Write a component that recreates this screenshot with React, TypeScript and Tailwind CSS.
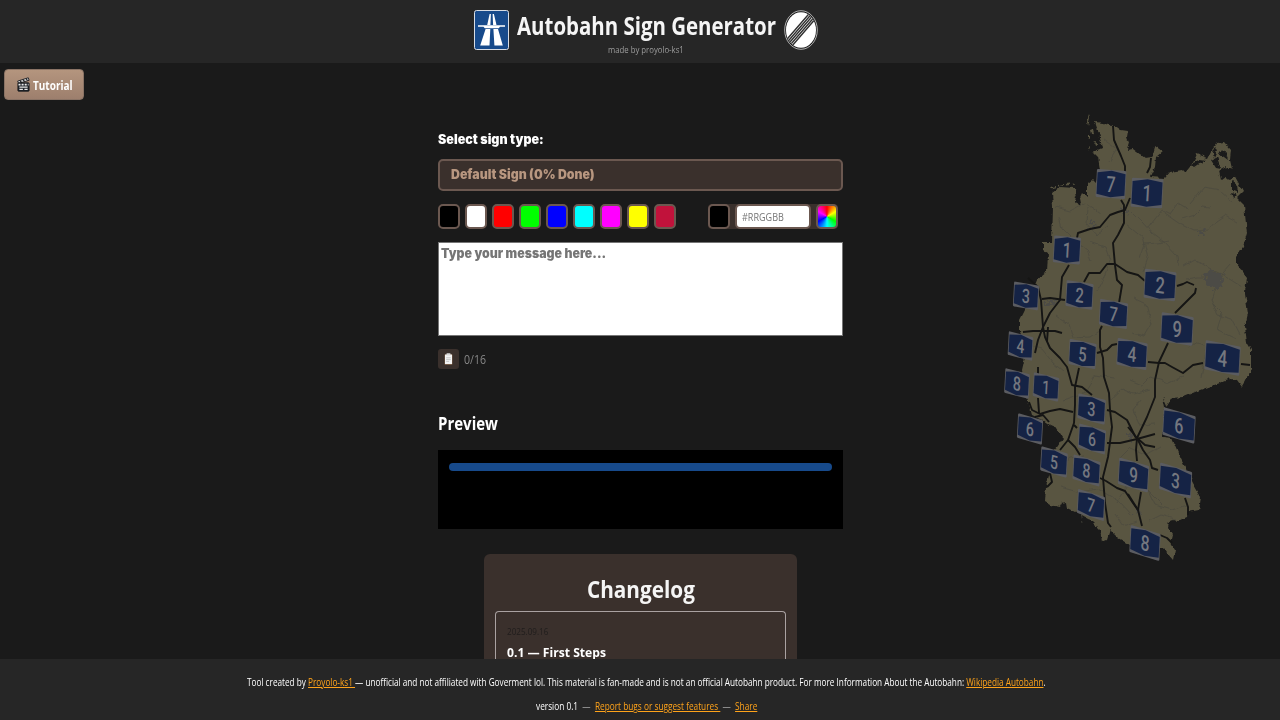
import { useLayoutEffect, useRef, useState, type ReactNode } from "react";

type FitProps = { width: number; className?: string; children: ReactNode };

/** A single line of text condensed or widened to an exact width. */
function Fit({ width, className = "", children }: FitProps) {
  const ref = useRef<HTMLSpanElement>(null);
  const [scale, setScale] = useState(1);
  useLayoutEffect(() => {
    if (ref.current) setScale(width / ref.current.offsetWidth);
  }, [width]);
  return (
    <span className={`block whitespace-pre ${className}`} style={{ width }}>
      <span ref={ref} className="inline-block origin-left" style={{ transform: `scaleX(${scale})` }}>
        {children}
      </span>
    </span>
  );
}

function MotorwayIcon() {
  return (
    <svg className="h-10 w-[35px]" viewBox="0 0 35 40">
      <rect x="0.5" y="0.5" width="34" height="39" rx="2" fill="#174a8b" stroke="#d7dce4" />
      <path d="M15.6 4h1.300l-.5 11h-3.200zM18.600 4h1.300l2.600 11h-3.400z" fill="#fff" />
      <path d="M4 15.300h27v1.500H26l-1.200 1.400h-14L9.500 16.800H4z" fill="#fff" />
      <path d="M11.600 19h4.700l-.8 16.500H6.200zM19.400 19H24l4.800 16.500h-8.400z" fill="#fff" />
    </svg>
  );
}

function EndSignIcon() {
  return (
    <svg className="h-10 w-[34px]" viewBox="0 0 34 40" preserveAspectRatio="none">
      <defs>
        <clipPath id="disc">
          <ellipse cx="17" cy="20" rx="15" ry="17.8" />
        </clipPath>
      </defs>
      <ellipse cx="17" cy="20" rx="16.3" ry="19.3" fill="#1b1b1b" stroke="#d8d8d8" strokeWidth="0.8" />
      <ellipse cx="17" cy="20" rx="15" ry="17.8" fill="#fff" />
      <g clipPath="url(#disc)" stroke="#303030" strokeWidth="1.45">
        <path d="M-8 42 30-2M-5.300 42 32.700-2M-2.600 42 35.400-2M.1 42 38.100-2M2.800 42 40.800-2" />
      </g>
    </svg>
  );
}

function ClapperIcon() {
  return (
    <svg className="h-[15px] w-[13px]" viewBox="0 0 13 15">
      <path d="M.7 4.100 11.300.8l.8 2.500L1.500 6.400z" fill="#e6e6e6" stroke="#17191e" strokeWidth=".9" />
      <path d="m3 3.600 1.500 1.800M6 2.600l1.500 1.800M9 1.700l1.500 1.800" stroke="#17191e" strokeWidth="1.1" />
      <rect x=".9" y="5.8" width="11.2" height="8.4" rx=".7" fill="#20242b" stroke="#121418" strokeWidth=".8" />
      <path d="M1.500 7.600h10" stroke="#eee" strokeWidth="1.8" strokeDasharray="2 1.1" />
      <path d="M2.400 10.200h8.200M2.400 12.300h3.500M7.400 12.300h3.200" stroke="#e8e8e8" strokeWidth="1.3" />
    </svg>
  );
}

function ClipboardIcon() {
  return (
    <svg className="h-3 w-[9px]" viewBox="0 0 9 12">
      <rect x=".6" y="1.3" width="7.8" height="10.4" rx=".8" fill="#8a6a50" />
      <rect x="1" y="1.6" width="7" height="9.4" fill="#f4f4f4" />
      <rect x="2.5" y=".2" width="4" height="2.4" rx=".6" fill="#d9d9d9" />
      <path d="M2.200 4.800h4.600M2.200 6.600h4.600M2.200 8.400h3" stroke="#b5b5b5" strokeWidth=".7" />
    </svg>
  );
}

const LAND =
  "1095,122 1104,123 1110,126 1114,125 1121,130 1128,131 1127,137 1129,143 1127,150 1133,149 1137,152 1145,158 1152,157 1155,147 1162,152 1156,157 1155,167 1150,177 1165,178 1170,172 1182,170 1185,173 1193,163 1197,154 1208,158 1212,150 1217,143 1224,142 1231,150 1230,160 1233,173 1238,182 1243,192 1237,198 1244,205 1247,233 1243,247 1236,257 1236,263 1247,277 1245,293 1248,313 1245,327 1247,343 1251,350 1251,370 1245,382 1242,387 1237,380 1230,379 1220,383 1200,390 1183,397 1172,398 1167,406 1163,397 1165,407 1163,437 1172,438 1180,457 1185,467 1193,483 1201,497 1199,510 1188,512 1187,517 1180,520 1169,522 1168,527 1173,535 1171,543 1175,550 1173,560 1167,553 1163,547 1150,547 1130,545 1118,538 1110,530 1107,540 1102,542 1100,530 1090,520 1077,513 1067,508 1066,502 1062,503 1060,507 1050,505 1045,502 1046,487 1050,473 1050,457 1063,438 1057,428 1050,425 1043,420 1032,415 1027,397 1022,370 1025,357 1020,330 1020,320 1025,310 1037,280 1047,272 1048,253 1043,250 1043,242 1052,242 1053,207 1052,193 1060,187 1075,188 1078,202 1082,193 1087,198 1087,183 1092,179 1097,184 1100,170 1098,157 1093,152 1102,148 1100,137";

const ROADS = [
  "1113,126 1114,140 1121,156 1125,166 1125,172",
  "1121,200 1124,205 1124,223 1118,235 1113,243 1115,265 1117,280 1122,285 1119,303",
  "1102,326 1100,330 1100,347 1103,358 1104,377 1109,393 1110,410 1112,427 1108,457 1103,477 1105,503 1108,523 1111,527",
  "1130,198 1125,210 1118,212 1110,215 1100,227 1090,229 1078,233 1077,238",
  "1069,265 1062,277 1060,300 1050,313 1043,327 1038,340 1035,353",
  "1038,367 1038,378",
  "1038,398 1039,413",
  "1151,158 1150,167 1147,173",
  "1042,299 1050,298 1065,300",
  "1084,282 1089,273 1100,273 1107,264 1115,264 1127,272 1138,275 1145,281",
  "1177,286 1183,284 1187,282 1194,285",
  "1196,288 1195,293 1185,303 1175,313",
  "1028,278 1038,287 1041,300 1043,327 1045,337 1050,348 1060,358 1067,367 1072,385 1082,387 1092,395",
  "1107,410 1115,412 1127,420 1136,438",
  "1023,332 1033,331 1043,331 1055,331 1062,333",
  "1048,327 1047,342",
  "1079,368 1075,387 1075,405 1074,423 1068,440 1060,450",
  "1074,425 1077,428",
  "1068,440 1075,447 1080,455",
  "1050,473 1052,482 1047,487",
  "1029,402 1032,410 1040,414 1050,411 1060,409 1073,412",
  "1035,417 1043,415 1049,422",
  "1107,443 1120,443 1137,439 1155,434",
  "1168,343 1159,362 1155,380 1155,397 1147,417 1137,438 1136,450 1137,461",
  "1128,427 1137,438 1145,445 1155,447",
  "1137,438 1143,450 1150,460 1152,468 1158,470",
  "1141,492 1138,510 1142,526",
  "1100,478 1106,481 1117,488 1125,491 1133,503 1138,510",
  "1128,494 1138,510",
  "1185,498 1188,507 1188,515",
  "1160,535 1167,538 1172,543",
  "1097,353 1107,350 1112,345 1117,344",
  "1148,362 1159,363 1165,363 1172,367 1183,373 1193,365 1203,363",
  "1241,364 1250,365",
];

const MINOR_ROADS = [
  "1132,212 1142,222 1152,233 1164,242 1177,256 1178,265",
  "1164,213 1180,224 1194,231 1208,230 1216,221 1225,215 1238,222",
  "1139,258 1144,244 1158,243 1170,241",
  "1088,207 1087,224 1097,235 1108,226",
  "1055,207 1070,211 1085,203 1101,214",
  "1184,266 1195,260 1208,268 1223,275 1242,287",
  "1148,228 1162,210 1170,214 1178,203 1188,209",
  "1190,204 1204,187 1220,190 1233,202",
  "1216,285 1211,300 1218,315 1232,319 1240,334",
  "1186,279 1198,277 1209,277 1217,280 1230,265",
  "1182,219 1195,215 1203,207 1210,208",
  "1059,217 1062,228 1074,240 1087,250 1091,261",
  "1090,242 1105,247 1110,260 1103,280 1097,291",
  "1127,224 1143,237 1148,258 1143,272",
  "1133,298 1146,304 1151,324 1144,336 1132,333",
  "1130,380 1142,385 1150,377 1169,383 1184,376",
  "1188,348 1198,342 1207,346 1201,377",
  "1213,304 1222,313 1217,330 1236,339",
  "1055,315 1069,325 1073,338 1090,337 1100,330",
  "1027,345 1042,349 1053,363 1063,371",
  "1063,401 1085,393 1096,375 1114,378",
  "1110,400 1122,389 1133,394 1150,389",
  "1060,487 1078,492 1098,489 1120,502 1132,515",
  "1083,522 1080,508 1100,518",
  "1148,490 1155,505 1172,510 1186,505",
  "1149,521 1161,515 1175,519",
  "1117,503 1131,481 1147,489 1163,505",
  "1120,458 1130,448 1146,455 1160,447",
  "1140,400 1133,410 1140,425 1155,424",
  "1104,140 1117,149 1109,162",
  "1060,467 1071,458 1085,456",
  "1115,513 1124,526 1137,521",
];

type Shield = [label: string, x: number, y: number, w: number, h: number, tilt: number];

const SHIELDS: Shield[] = [
  ["7", 1111, 184, 29.5, 28, 4],
  ["1", 1147, 193, 31.5, 29, 3],
  ["1", 1067, 250, 27, 27, 5],
  ["3", 1026, 296, 25, 25, 10],
  ["2", 1079.5, 295, 27, 26, 9],
  ["2", 1160, 285, 31.5, 29, 7],
  ["7", 1113.5, 314, 28, 26, 10],
  ["9", 1177, 329, 32, 29, 9],
  ["4", 1020.5, 346, 24.5, 24, 14],
  ["5", 1082.5, 354, 27, 25.5, 11],
  ["4", 1132, 354, 30, 27, 11],
  ["4", 1222.5, 358, 35, 29.5, 11],
  ["8", 1017, 383.5, 24.5, 25, 14],
  ["1", 1046, 387, 25.5, 24, 13],
  ["3", 1091.5, 409, 27.5, 25, 14],
  ["6", 1179, 425.5, 32, 28, 16],
  ["6", 1030, 429, 25, 25, 16],
  ["6", 1092, 439, 27, 24.5, 15],
  ["5", 1054, 462, 26.5, 24.5, 16],
  ["8", 1086.5, 470.5, 27, 25, 16],
  ["9", 1133.5, 475, 30, 27, 16],
  ["3", 1175.5, 480.5, 32, 27, 17],
  ["7", 1091, 505, 27, 24.5, 17],
  ["8", 1145, 543, 30, 27.5, 17],
];

function GermanyMap() {
  return (
    <svg className="h-[456px] w-[256px]" viewBox="1000 110 256 456">
      <defs>
        <filter id="coast" x="-5%" y="-5%" width="110%" height="110%" colorInterpolationFilters="sRGB">
          <feTurbulence type="fractalNoise" baseFrequency="0.16" numOctaves="3" seed="4" />
          <feDisplacementMap in="SourceGraphic" scale="4.5" xChannelSelector="R" yChannelSelector="G" />
        </filter>
        <filter id="wobble" x="-5%" y="-5%" width="110%" height="110%" colorInterpolationFilters="sRGB">
          <feTurbulence type="fractalNoise" baseFrequency="0.11" numOctaves="2" seed="9" />
          <feDisplacementMap in="SourceGraphic" scale="5" xChannelSelector="R" yChannelSelector="G" />
        </filter>
        <filter id="speckle" x="-20%" y="-20%" width="140%" height="140%" colorInterpolationFilters="sRGB">
          <feTurbulence type="fractalNoise" baseFrequency="0.3" numOctaves="2" seed="2" />
          <feDisplacementMap in="SourceGraphic" scale="14" xChannelSelector="R" yChannelSelector="G" />
        </filter>
      </defs>
      <g filter="url(#coast)" fill="#595541">
        <polygon points={LAND} />
        <path d="m1089 115 1 3-2 8-1-5zM1090 130l3-1 1 4-3 1zM1088 136l2 0 0 3-2-1zM1094 142l2-1 1 3-2 1zM1099 144l2-1 1 3zM1088 146l1 1-1 3z" />
        <path d="M1051 187l5-1v1.300l-4 1zM1058 185l5-1v1.400l-5 1zM1065 184l5-.6v1.500l-4 .6zM1072 184l4-1v1.500l-4 .5z" />
        <g fill="#1a1a1a">
          <path d="M1219 171l7-4 8 2 3 5-7 5-5-2-4 3zM1211 160l6-3 2 6 2 6-5-1zM1192 164l8-5 7 1-7 3-6 4zM1222 149l4 5 2 6-4-3-5-3zM1232 181l5 4 1 7-5-2-1 4zM1231 193l6 2-4 3zM1076 196l4 2 1 6-3 2-3-4zM1214 148l3 3-3 7-1-4z" />
        </g>
      </g>
      <g filter="url(#wobble)" fill="none" stroke="#4b493f" strokeWidth="0.7">
        {MINOR_ROADS.map((points) => (
          <polyline key={points} points={points} />
        ))}
      </g>
      <g filter="url(#speckle)" fill="#4c4b46">
        <path d="M1206 273l6-3 9 4 3 7-4 7-10-1-5-6zM1199 231l5-1 1 4-5 2zM1089 222l5-1 2 5-5 1zM1045 301l10 0 2 3-10 1zM1128 434l7 0 0 6-5 0zM1135 508l5 1 1 5-5-1zM1123 207l4 3-1 6-4-3z" />
      </g>
      <g fill="none" stroke="#151514" strokeWidth="1.9" strokeLinejoin="round">
        {ROADS.map((points) => (
          <polyline key={points} points={points} />
        ))}
      </g>
      {SHIELDS.map(([label, x, y, w, h, tilt]) => {
        const r = w / 2;
        const b = h / 2;
        return (
          <g key={`${x}-${y}`} transform={`translate(${x} ${y}) skewY(${tilt}) skewX(-3)`}>
            <rect x={-r} y={-b} width={w} height={h} rx="1.3" fill="#5b5c61" />
            <polygon
              points={`${-r + 0.8},${-b + 3.2} 0,${-b + 0.7} ${r - 0.8},${-b + 3.2} ${r - 0.8},${b - 3.2} 0,${b - 0.7} ${-r + 0.8},${b - 3.2}`}
              fill="#152345"
            />
            <text
              transform="scale(0.72 1)"
              y={h * 0.285}
              textAnchor="middle"
              fontFamily="Roboto, sans-serif"
              fontWeight="500"
              fontSize={h * 0.79}
              fill="#74777f"
            >
              {label}
            </text>
          </g>
        );
      })}
    </svg>
  );
}

const SWATCHES = [
  "bg-[#000000]",
  "bg-[#ffffff]",
  "bg-[#ff0000]",
  "bg-[#00ff00]",
  "bg-[#0000ff]",
  "bg-[#00ffff]",
  "bg-[#ff00ff]",
  "bg-[#ffff00]",
  "bg-[#c1123b]",
];

const SWATCH = "h-[25px] w-[22px] shrink-0 rounded-[5px] border-2 border-[#6b5850]";
const LINK = "text-[#ffa31a] underline underline-offset-1";

export default function App() {
  return (
    <div className="flex h-[720px] w-[1280px] flex-col overflow-hidden bg-[#1a1a1a] font-['Open_Sans','Noto_Sans',sans-serif] text-white">
      <header className="flex h-[63px] shrink-0 justify-center bg-[#262626] pt-[10px] pl-[11px]">
        <MotorwayIcon />
        <div className="mr-2 ml-[8px] flex flex-col items-center">
          <h1 className="h-[32px] text-[25px] leading-[31px] font-bold text-[#f5f5f5]">
            <Fit width={259}>Autobahn Sign Generator</Fit>
          </h1>
          <Fit width={76} className="text-[9.5px] leading-[16px] text-[#9d9d9d]">
            made by proyolo-ks1
          </Fit>
        </div>
        <EndSignIcon />
      </header>

      <main className="grid h-[596px] shrink-0 grid-cols-[438px_405px_1fr] overflow-hidden">
        <div className="pt-[6px] pl-1">
          <button className="flex h-[31px] w-[80px] items-center gap-[3px] rounded-[4px] border border-[#8a7365] bg-linear-to-b from-[#b4957e] to-[#9d7f6d] pl-[12px]">
            <ClapperIcon />
            <Fit width={40} className="pt-[2px] text-left text-[12px] font-bold">
              Tutorial
            </Fit>
          </button>
        </div>

        <section className="flex flex-col">
          <label className="mt-[65px] h-[31px] font-['Inter',sans-serif] text-[13px] leading-[22px] font-black">
            <Fit width={106}>Select sign type:</Fit>
          </label>
          <div className="flex h-8 shrink-0 items-center rounded-[5px] border-2 border-[#6b5850] bg-[#3a302c] pl-[11px] font-['Inter',sans-serif] text-[13px] font-black text-[#b89780]">
            <Fit width={144}>Default Sign (0% Done)</Fit>
          </div>

          <div className="mt-[13px] flex shrink-0 justify-between pr-[5px]">
            <div className="flex gap-[5px]">
              {SWATCHES.map((color) => (
                <span key={color} className={`${SWATCH} ${color}`} />
              ))}
            </div>
            <div className="flex justify-between gap-[5px] rounded-[4px] bg-[#3a302c]">
              <span className={`${SWATCH} bg-black`} />
              <div className="flex h-[25px] w-[76px] items-center rounded-[5px] border-2 border-[#6b5850] bg-white pl-[5px] text-[11px] text-[#757575]">
                <Fit width={42} className="pt-px">
                  #RRGGBB
                </Fit>
              </div>
              <span
                className={`${SWATCH} bg-[conic-gradient(#ff0000,#ffff00,#00ff00,#00ffff,#0000ff,#ff00ff,#ff0000)] bg-origin-border`}
              />
            </div>
          </div>

          <div className="mt-[13px] h-[94px] shrink-0 border border-[#767676] bg-white pt-[2px] pl-[2px] font-['Inter',sans-serif] text-[13px] leading-[16px] font-black text-[#757575]">
            <Fit width={165}>Type your message here...</Fit>
          </div>

          <div className="mt-[13px] flex h-5 shrink-0 items-center gap-[5px]">
            <span className="flex h-5 w-[21px] items-center justify-center rounded-[3px] bg-[#3a302c]">
              <ClipboardIcon />
            </span>
            <Fit width={22} className="pt-[2px] text-[12.5px] text-[#888888]">
              0/16
            </Fit>
          </div>

          <h2 className="mt-[41px] h-[40px] shrink-0 text-[17.5px] leading-[27px] font-bold">
            <Fit width={60}>Preview</Fit>
          </h2>
          <div className="h-[79px] shrink-0 bg-black px-[11px] pt-[13px]">
            <div className="h-2 rounded-full bg-[#174a8b]" />
          </div>

          <div className="mt-[25px] flex h-[140px] w-[313px] shrink-0 flex-col items-center self-center rounded-[6px] bg-[#3a302c] px-[11px] pt-[18px]">
            <h2 className="h-[39px] shrink-0 text-[24px] leading-[34px] font-bold text-[#f5f5f5]">
              <Fit width={108}>Changelog</Fit>
            </h2>
            <article className="h-[100px] w-full shrink-0 rounded-t-[4px] border border-b-0 border-[#aaa2a2] pt-[12px] pl-[11px]">
              <Fit width={41} className="text-[9.5px] leading-[16px] text-[#201d1c]">
                2025.09.16
              </Fit>
              <h3 className="text-[13px] leading-[24px] font-bold">
                <Fit width={99}>0.1 — First Steps</Fit>
              </h3>
            </article>
          </div>
        </section>

        <aside className="pt-[47px] pl-[157px]">
          <GermanyMap />
        </aside>
      </main>

      <footer className="flex h-[61px] shrink-0 flex-col items-center bg-[#262626] pt-[11px] text-[10.3px] leading-[24px] font-medium">
        <Fit width={799} className="mr-[-12px]">
          Tool created by <a className={LINK}>Proyolo-ks1 </a>— unofficial and not affiliated with Goverment lol. This
          material is fan-made and is not an official Autobahn product. For more Information About the Autobahn:{" "}
          <a className={LINK}>Wikipedia Autobahn</a>.
        </Fit>
        <Fit width={221} className="mr-[-12px]">
          version 0.1 {" "}<span className="text-[#a0a0a0]">—</span>
          {"  "}
          <a className={LINK}>Report bugs or suggest features </a>
          {" "}<span className="text-[#a0a0a0]">—</span>
          {"  "}
          <a className={LINK}>Share</a>
        </Fit>
      </footer>
    </div>
  );
}
